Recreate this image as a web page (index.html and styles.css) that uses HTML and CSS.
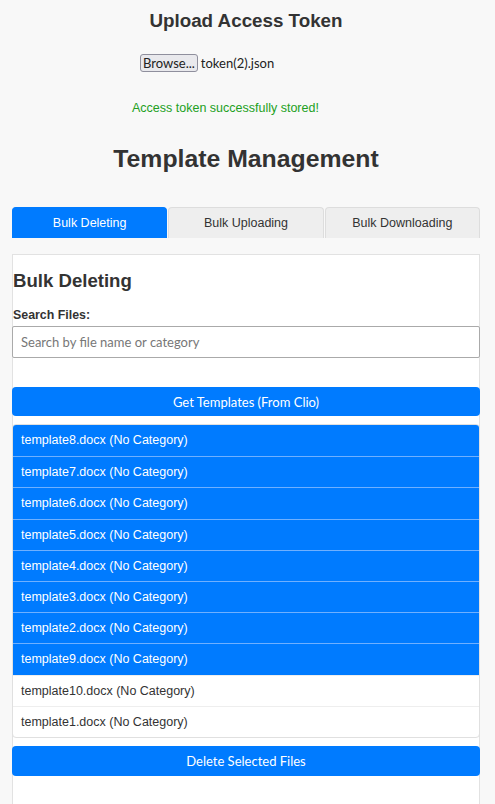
FILE: index.html
```html
<!DOCTYPE html>
<html>
<head>
<meta charset="utf-8">
<link rel="stylesheet" href="styles.css">
</head>
<body>
<section class="upload">
  <h2 class="upload-title">Upload Access Token</h2>
  <div class="file-row">
    <button class="browse">Browse...</button>
    <span class="file-name">token(2).json</span>
  </div>
  <p class="success">Access token successfully stored!</p>
</section>
<h1 class="main-title">Template Management</h1>
<nav class="tabs">
  <button class="tab active">Bulk Deleting</button>
  <button class="tab">Bulk Uploading</button>
  <button class="tab">Bulk Downloading</button>
</nav>
<div class="card">
  <h2 class="card-title">Bulk Deleting</h2>
  <label class="label">Search Files:</label>
  <input class="search" type="text" placeholder="Search by file name or category">
  <button class="btn btn-get">Get Templates (From Clio)</button>
  <ul class="list">
    <li class="item selected">template8.docx (No Category)</li>
    <li class="item selected">template7.docx (No Category)</li>
    <li class="item selected">template6.docx (No Category)</li>
    <li class="item selected">template5.docx (No Category)</li>
    <li class="item selected">template4.docx (No Category)</li>
    <li class="item selected">template3.docx (No Category)</li>
    <li class="item selected">template2.docx (No Category)</li>
    <li class="item selected">template9.docx (No Category)</li>
    <li class="item">template10.docx (No Category)</li>
    <li class="item">template1.docx (No Category)</li>
  </ul>
  <button class="btn btn-delete">Delete Selected Files</button>
</div>
</body>
</html>
```
FILE: styles.css
```css
* { box-sizing: border-box; }
html, body { margin: 0; padding: 0; }
body {
  background: #f8f8f8;
  font-family: "Liberation Sans", Arial, sans-serif;
  color: #333;
  padding: 0 15px 0 12px;
  height: 804px;
  overflow: hidden;
}
.upload-title {
  margin: 9px 0 0;
  font-size: 18.8px;
  line-height: 24px;
  text-align: center;
  font-weight: bold;
}
.file-row {
  margin-top: 21px;
  padding-left: 128px;
  display: flex;
  align-items: center;
  gap: 3px;
  height: 18px;
}
.browse {
  font-family: "Lato", "Open Sans", sans-serif;
  font-size: 13px;
  color: #222;
  background: #e9e9ed;
  border: 1px solid #8f8f9d;
  border-radius: 3px;
  padding: 0 2px;
  height: 18px;
  line-height: 16px;
}
.file-name {
  font-family: "Lato", "Open Sans", sans-serif;
  font-size: 13px;
  color: #222;
}
.success {
  margin: 28px 0 0;
  padding-left: 120px;
  font-size: 12.5px;
  line-height: 16px;
  color: #22a022;
}
.main-title {
  margin: 28px 0 0;
  font-size: 24.8px;
  line-height: 30px;
  text-align: center;
  font-weight: bold;
}
.tabs {
  margin-top: 33px;
  display: flex;
  gap: 1px;
}
.tab {
  flex: 1;
  height: 31px;
  font-family: "Liberation Sans", Arial, sans-serif;
  font-size: 12.5px;
  color: #333;
  background: #eeeeee;
  border: 1px solid #dddddd;
  border-bottom: none;
  border-radius: 4px 4px 0 0;
  padding: 0;
}
.tab.active {
  background: #007bff;
  border-color: #007bff;
  color: #fff;
}
.card {
  margin-top: 16px;
  background: #fff;
  border: 1px solid #e2e2e2;
  border-bottom: none;
  height: 560px;
  display: flex;
  flex-direction: column;
}
.card-title {
  margin: 14px 0 0;
  font-size: 18.6px;
  line-height: 24px;
  font-weight: bold;
}
.label {
  margin-top: 14px;
  font-size: 12.4px;
  line-height: 16px;
  font-weight: bold;
}
.search {
  margin: 3px -1px 0;
  height: 32px;
  border: 1px solid #aaa;
  border-radius: 2px;
  padding: 0 8px;
  font-family: "Lato", "Open Sans", sans-serif;
  font-size: 13px;
  background: #fff;
}
.search::placeholder { color: #777; }
.btn {
  margin: 0 -1px;
  border: none;
  border-radius: 4px;
  background: #007bff;
  color: #fff;
  font-family: "Lato", "Open Sans", sans-serif;
  font-size: 13px;
  padding: 0;
}
.btn-get { margin-top: 29px; height: 29px; }
.btn-delete { margin-top: 8px; height: 30px; }
.list {
  list-style: none;
  margin: 8px -1px 0;
  padding: 0;
  border: 1px solid #e0e0e0;
  border-radius: 4px;
  overflow: hidden;
}
.item {
  height: 31.2px;
  line-height: 30.2px;
  padding: 0 8px;
  font-size: 12.5px;
  color: #333;
  border-top: 1px solid #eeeeee;
}
.item:first-child { border-top: none; }
.item.selected {
  background: #007bff;
  color: #fff;
  border-top-color: #6fb0ff;
}
```
